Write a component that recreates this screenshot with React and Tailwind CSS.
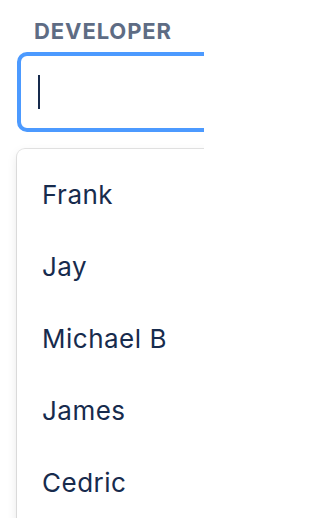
const developers = ['Frank', 'Jay', 'Michael B', 'James', 'Cedric']

export default function App() {
  return (
    <div className="w-[204px] h-[518px] overflow-hidden bg-white" style={{ fontFamily: 'Inter, "Noto Sans", sans-serif' }}>
      <div className="w-[520px] pl-[17px] pt-[17px]">
        <label className="block pl-[17px] text-[22px] leading-[28px] font-bold tracking-[0.9px] text-[#5e6c84]">
          DEVELOPER
        </label>
        <div className="mt-[7px] h-[80px] rounded-[10px] border-[4px] border-[#4c9aff] bg-white flex items-center pl-[17px]">
          <span className="block w-[2px] h-[34px] bg-[#172b4d]" />
        </div>
        <div className="mt-[17px] h-[400px] rounded-[8px] bg-white shadow-[0_0_0_1px_rgba(0,0,0,0.1),0_4px_11px_rgba(0,0,0,0.1)] pt-[10px] pb-[8px]">
          {developers.map((name) => (
            <div key={name} className="px-[25px] py-[16px] text-[26px] leading-[40px] tracking-[0.5px] text-[#172b4d]">
              {name}
            </div>
          ))}
        </div>
      </div>
    </div>
  )
}
